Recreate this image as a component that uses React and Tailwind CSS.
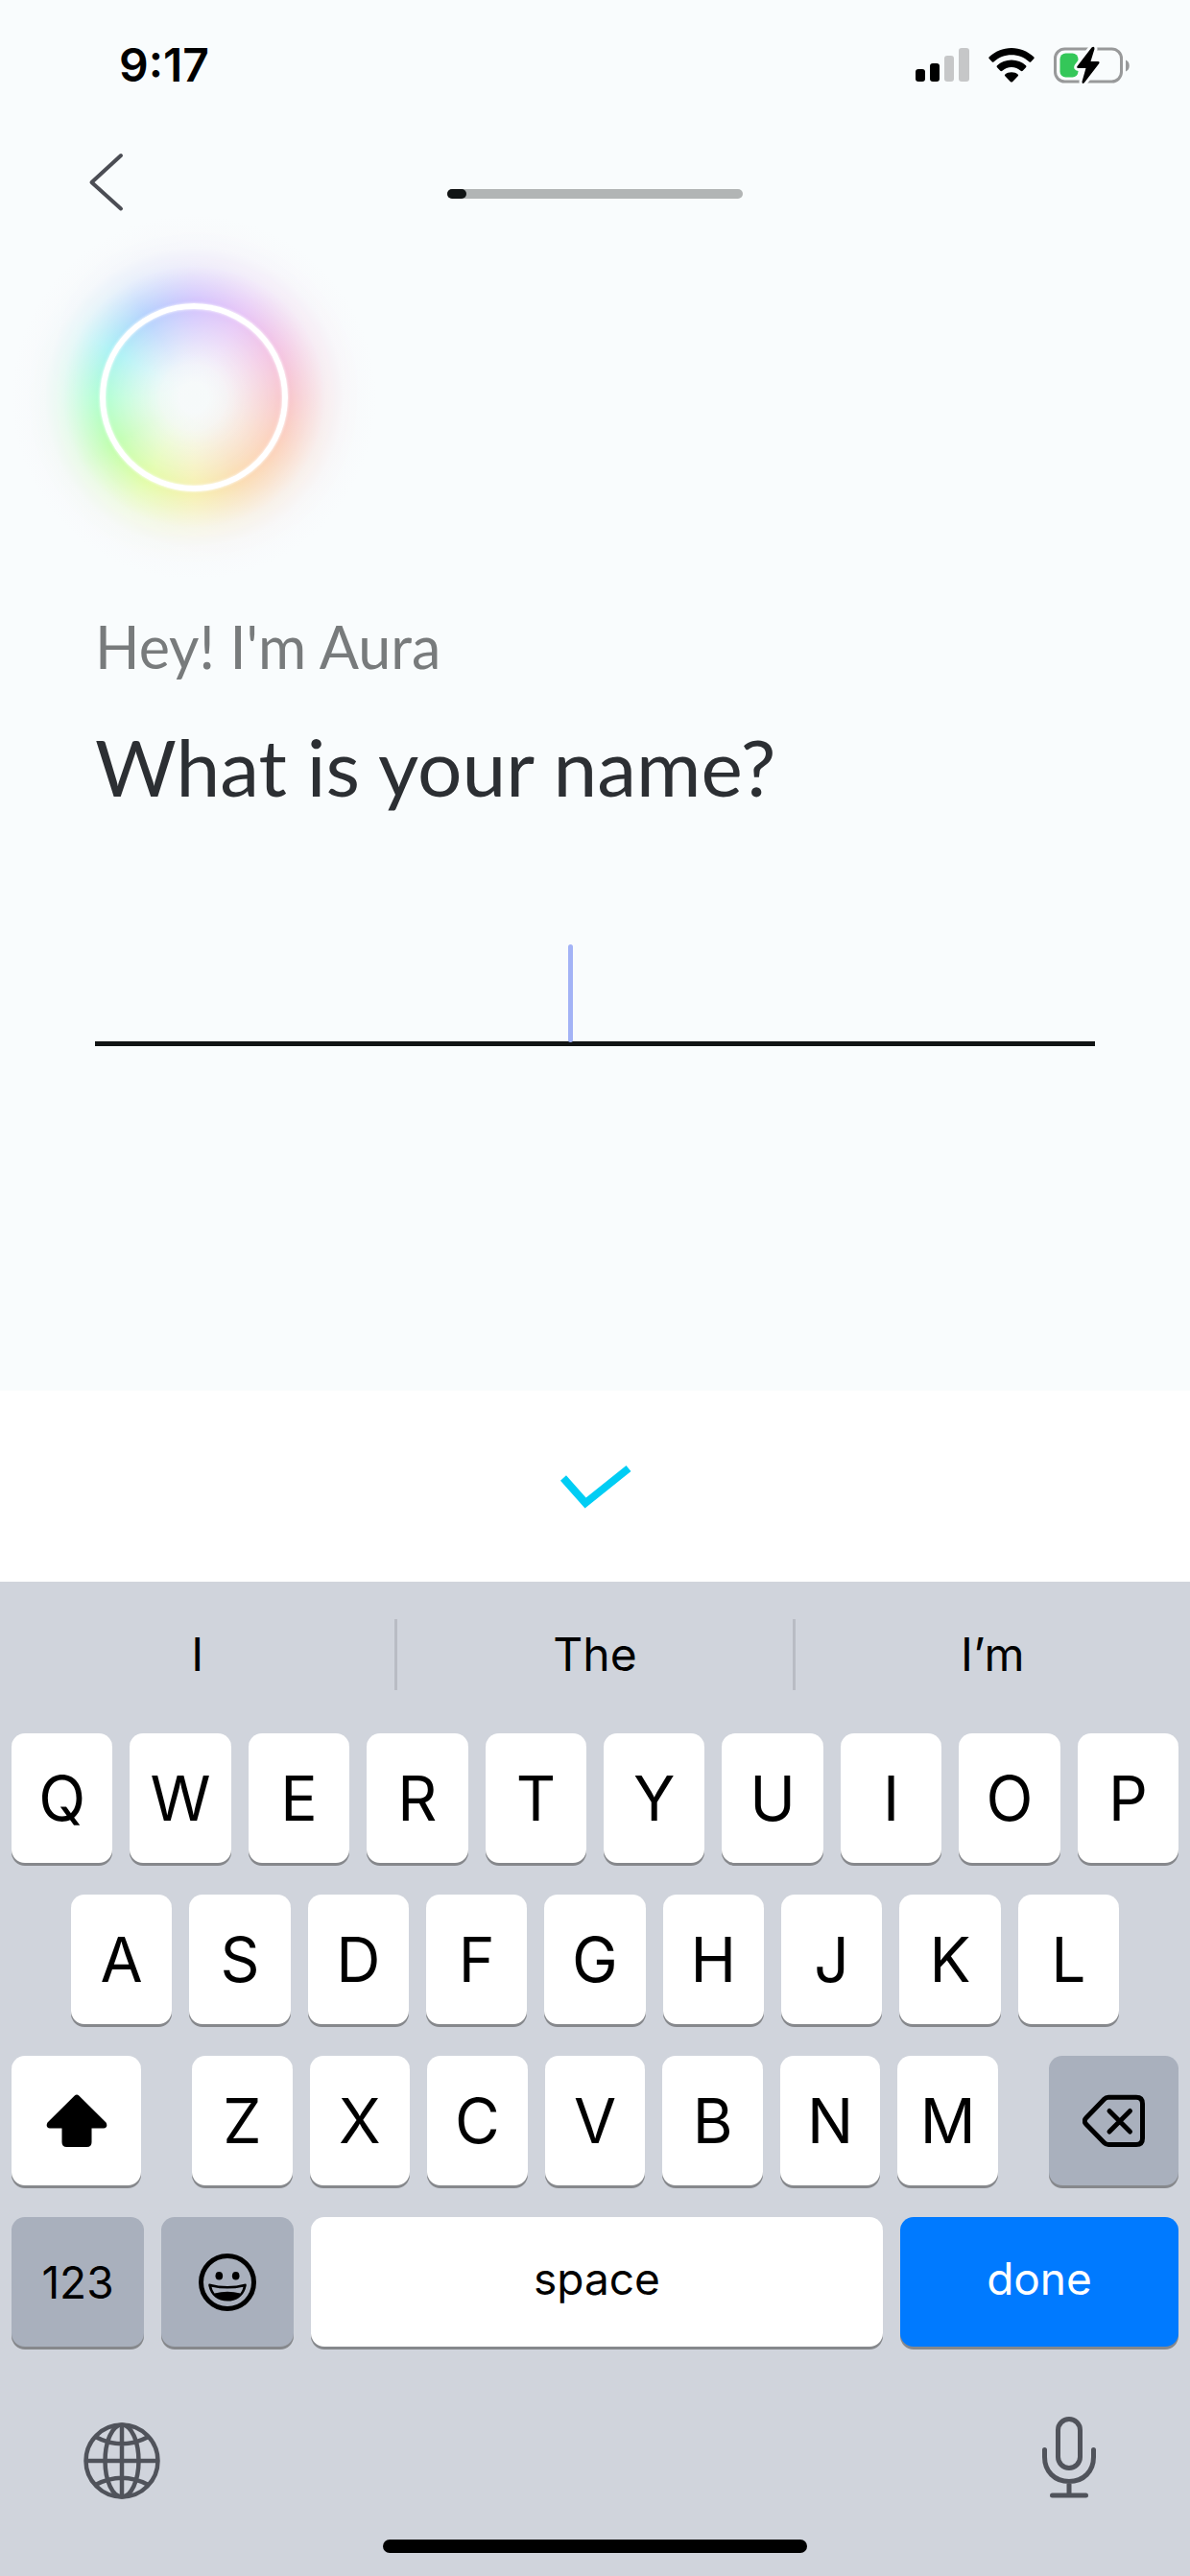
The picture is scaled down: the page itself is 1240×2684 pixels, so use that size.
import React, { useState } from 'react';

// --- KEYBOARD DATA ---
const suggestions = ['I', 'The', 'I’m'];
const rowOne = ['Q', 'W', 'E', 'R', 'T', 'Y', 'U', 'I', 'O', 'P'];
const rowTwo = ['A', 'S', 'D', 'F', 'G', 'H', 'J', 'K', 'L'];
const rowThree = ['Z', 'X', 'C', 'V', 'B', 'N', 'M'];

const keyBase = 'flex h-[135px] items-center justify-center rounded-[14px] shadow-[0_3px_0_#86888c]';

function LetterKey({ letter, onPress }) {
  return (
    <button
      type="button"
      onClick={() => onPress(letter)}
      className={`${keyBase} min-w-0 flex-1 bg-white text-[64px] leading-none`}
    >
      {letter}
    </button>
  );
}

function StatusBar() {
  return (
    <div className="flex h-[136px] items-center justify-between pr-[62px] pl-31">
      <span className="text-[48px] leading-none font-semibold">9:17</span>
      <div className="flex items-center gap-5">
        {/* Signal */}
        <svg width="56" height="36" viewBox="0 0 56 36" aria-hidden="true">
          <rect x="0" y="22" width="10" height="13" rx="3" />
          <rect x="15" y="16" width="10" height="19" rx="3" />
          <rect x="30" y="8" width="10" height="27" rx="3" fill="#c6c7c8" />
          <rect x="45" y="0" width="11" height="35" rx="3" fill="#c6c7c8" />
        </svg>
        {/* Wifi */}
        <svg width="48" height="36" viewBox="0 0 48 36" aria-hidden="true">
          <path d="M24 0C15 0 7 3.500 .8 9.300Q-.2 10.300 .8 11.300L3.600 14.200Q4.600 15.200 5.700 14.200C10.600 9.800 17 7.200 24 7.200S37.400 9.800 42.300 14.200Q43.400 15.200 44.400 14.200L47.200 11.300Q48.200 10.300 47.200 9.300C41 3.500 33 0 24 0Z" />
          <path d="M24 12.500C18.200 12.500 13 14.700 9 18.300Q8 19.300 9 20.300L12.300 23.700Q13.300 24.600 14.400 23.700C17 21.400 20.300 20 24 20S31 21.400 33.600 23.700Q34.700 24.600 35.700 23.700L39 20.300Q40 19.300 39 18.300C35 14.700 29.800 12.500 24 12.500Z" />
          <path d="M24 25.200C21.300 25.200 19 26.100 17.300 27.500Q16.400 28.400 17.300 29.300L23 35.200Q24 36 25 35.200L30.700 29.300Q31.600 28.400 30.700 27.500C29 26.100 26.700 25.200 24 25.200Z" />
        </svg>
        {/* Battery */}
        <svg width="80" height="40" viewBox="0 0 80 40" aria-hidden="true">
          <rect x="1.500" y="3" width="69" height="34" rx="10" fill="none" stroke="#98999a" strokeWidth="3" />
          <path d="M75 14.500C80 16 80 25 75 26.500Z" fill="#98999a" />
          <rect x="6.500" y="7.500" width="19" height="25" rx="6" fill="#34c759" />
          <path
            d="M39.500 1.500 24.500 21Q23.500 23 25.500 23H33.500L29.500 37Q29.500 40.500 32 38L47 18.500Q48.500 16 46 16H38.500L42.500 3Q42.500-.5 39.500 1.500Z"
            stroke="#f9fcfd"
            strokeWidth="6"
            paintOrder="stroke"
          />
        </svg>
      </div>
    </div>
  );
}

function AuraOrb() {
  return (
    <div className="relative flex size-95 items-center justify-center">
      <div className="absolute inset-0 rounded-full bg-[radial-gradient(closest-side,#f6fafa_0%,#f8f9fb_80%,#f9fcfd_100%)]" />
      <div className="absolute inset-0 bg-[conic-gradient(#cdbdfd,#e4bdf6_30deg,#f3bce0_60deg,#f8c0c6_90deg,#fccbb2_120deg,#fbd8a8_150deg,#f6efa6_180deg,#dffd9c_210deg,#b8ffa4_240deg,#a8ffce_270deg,#9ff0f4_300deg,#acccfe_330deg,#cdbdfd)] mask-[radial-gradient(closest-side,transparent_8%,rgba(0,0,0,.1)_18%,rgba(0,0,0,.5)_34%,rgba(0,0,0,.8)_46%,rgba(0,0,0,.85)_53%,rgba(0,0,0,.55)_62%,rgba(0,0,0,.2)_72%,rgba(0,0,0,.04)_82%,transparent_92%)]" />
      <div className="relative size-49 rounded-full border-[6px] border-white shadow-[0_0_3px_#fff,inset_0_0_3px_#fff]" />
    </div>
  );
}

function App() {
  const [name, setName] = useState('');

  const press = (char) => setName((prev) => prev + char);

  return (
    <div className="flex min-h-screen flex-col bg-[#f9fcfd] font-['Inter',sans-serif] text-black">
      {/* QUESTION AREA */}
      <main className="flex-1">
        <StatusBar />

        <header className="grid grid-cols-3 items-center px-20">
          <button type="button" aria-label="Back" className="flex h-27 w-16 items-center justify-center">
            <svg width="40" height="64" viewBox="0 0 40 64" fill="none" stroke="#4b4d54" strokeWidth="4" strokeLinecap="round" strokeLinejoin="round">
              <path d="M34 4 3.500 32 34 59.500" />
            </svg>
          </button>
          <div
            role="progressbar"
            aria-label="Progress"
            aria-valuenow={6}
            aria-valuemin={0}
            aria-valuemax={100}
            className="mt-6 h-2.5 w-77 justify-self-center rounded-full bg-[#b2b5b5]"
          >
            <div className="h-full w-5 rounded-full bg-[#111414]" />
          </div>
        </header>

        <div className="-mt-5 pl-3">
          <AuraOrb />
        </div>

        <div className="mt-[34px] px-[99px] font-['Lato',sans-serif]">
          <p className="text-[61px] leading-[72px] text-[#787b7c]">Hey! I'm Aura</p>
          <h1 className="mt-9 text-[82px] leading-[104px] text-[#2c2f33]">
            <label htmlFor="name">What is your name?</label>
          </h1>
          <div className="relative mt-30">
            <input
              id="name"
              type="text"
              value={name}
              onChange={(e) => setName(e.target.value)}
              autoComplete="off"
              className="block h-[120px] w-full border-b-[5px] border-[#111414] bg-transparent text-center text-[72px] caret-transparent outline-none"
            />
            {name === '' && (
              <span className="pointer-events-none absolute bottom-1 left-1/2 -ml-7 h-[102px] w-[5px] rounded-full bg-[#a3b3f6]" />
            )}
          </div>
        </div>
      </main>

      {/* CONFIRM BAR */}
      <div className="flex h-[199px] items-center justify-center bg-white">
        <button type="button" aria-label="Confirm" className="p-6">
          <svg width="76" height="48" viewBox="0 0 76 48" fill="none" stroke="#00cdf4" strokeWidth="8">
            <path d="M5 15 28 41 73 5" />
          </svg>
        </button>
      </div>

      {/* KEYBOARD */}
      <section aria-label="Keyboard" className="flex flex-col bg-[#d0d4dc]">
        <div className="flex h-[152px] items-center divide-x-3 divide-[#b9bcc4]">
          {suggestions.map((word) => (
            <button
              key={word}
              type="button"
              onClick={() => setName(word)}
              className="h-[74px] flex-1 text-[48px] leading-none"
            >
              {word}
            </button>
          ))}
        </div>

        <div className="mt-1.5 flex flex-col gap-[33px] px-3">
          <div className="flex gap-[18px]">
            {rowOne.map((l) => <LetterKey key={l} letter={l} onPress={press} />)}
          </div>

          <div className="flex gap-[18px] px-[62px]">
            {rowTwo.map((l) => <LetterKey key={l} letter={l} onPress={press} />)}
          </div>

          <div className="flex gap-[53px]">
            <button type="button" aria-label="Shift" className={`${keyBase} w-[135px] bg-white`}>
              <svg width="64" height="56" viewBox="0 0 64 56">
                <path d="M29.500 1.800Q32-.6 34.500 1.800L62.500 29.500Q65 34.500 60 35.500H47.500V50Q47.500 55 42.500 55H21.500Q16.500 55 16.500 50V35.500H4Q-1 34.500 1.500 29.500Z" />
              </svg>
            </button>
            <div className="flex flex-1 gap-[18px]">
              {rowThree.map((l) => <LetterKey key={l} letter={l} onPress={press} />)}
            </div>
            <button
              type="button"
              aria-label="Delete"
              onClick={() => setName((prev) => prev.slice(0, -1))}
              className={`${keyBase} w-[135px] bg-[#a9b0bd]`}
            >
              <svg width="66" height="56" viewBox="0 0 66 56" fill="none" stroke="#000" strokeWidth="5" strokeLinecap="round" strokeLinejoin="round">
                <path d="M27 3.300H56Q62.500 3.300 62.500 10V46Q62.500 52.500 56 52.500H27Q24.500 52.500 22.500 50.500L3.500 31Q1 28 3.500 25L22.500 5.300Q24.500 3.300 27 3.300Z" />
                <path d="m28 17.500 21.500 21.500M49.500 17.500 28 39" />
              </svg>
            </button>
          </div>

          <div className="flex gap-[18px] text-[46px] leading-none">
            <button type="button" className={`${keyBase} w-[138px] bg-[#a9b0bd]`}>123</button>
            <button type="button" aria-label="Emoji" className={`${keyBase} w-[138px] bg-[#a9b0bd]`}>
              <svg width="60" height="60" viewBox="0 0 60 60">
                <circle cx="30" cy="30" r="27.500" fill="none" stroke="#000" strokeWidth="5" />
                <ellipse cx="21.300" cy="23.300" rx="3.800" ry="4.300" />
                <ellipse cx="38.700" cy="23.300" rx="3.800" ry="4.300" />
                <path d="M11.300 31.500Q30 36.500 48.700 31.500Q50 31.500 49.700 33.500C47.500 44 40 49.500 30 49.500S12.500 44 10.300 33.500Q10 31.500 11.300 31.500Z" />
                <path d="M13.500 34.700Q30 38.500 46.500 34.700Q46 38 43.500 41.500Q30 38 16.500 41.500Q14 38 13.500 34.700Z" fill="#a9b0bd" />
              </svg>
            </button>
            <button type="button" onClick={() => press(' ')} className={`${keyBase} flex-1 bg-white pb-2`}>space</button>
            <button type="button" className={`${keyBase} w-[290px] bg-[#007aff] pb-2 text-white`}>done</button>
          </div>
        </div>

        <div className="mt-[59px] flex items-center justify-between px-[84px]">
          <button type="button" aria-label="Next keyboard" className="p-[3px]">
            <svg width="80" height="96" viewBox="0 0 80 96" fill="none" stroke="#50535b" strokeWidth="4.500">
              <circle cx="40" cy="51" r="37.500" />
              <ellipse cx="40" cy="51" rx="17.500" ry="37.500" />
              <path d="M40 13.500V88.500M2.500 51H77.500M12.500 26Q40 40.500 67.500 26M12.500 76Q40 61.500 67.500 76" />
            </svg>
          </button>
          <button type="button" aria-label="Dictate" className="p-3.5">
            <svg width="56" height="86" viewBox="0 0 56 86" fill="none" stroke="#50535b" strokeWidth="5" strokeLinecap="round">
              <rect x="16.500" y="2.500" width="23" height="51" rx="11.500" />
              <path d="M2.500 34.500V42C2.500 57 13 67.500 28 67.500S53.500 57 53.500 42V34.500M28 67.500V82M10.500 82H45.500" />
            </svg>
          </button>
        </div>

        <div className="mx-auto mt-7 mb-6 h-3.5 w-[442px] rounded-full bg-black" />
      </section>
    </div>
  );
}

export default App;
